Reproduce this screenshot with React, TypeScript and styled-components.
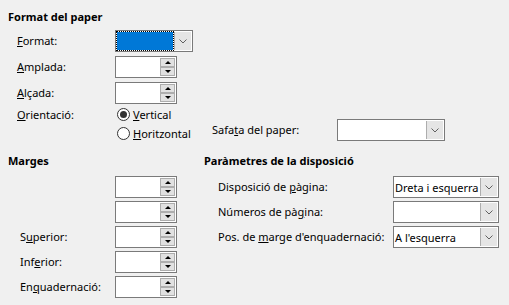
import React from "react";
import styled, { createGlobalStyle } from "styled-components";

const GlobalStyle = createGlobalStyle`
  body {
    margin: 0;
    background: #f0f0f0;
  }
`;

const Page = styled.div`
  width: 509px;
  height: 305px;
  background: #f0f0f0;
  font-family: "Noto Sans", "Open Sans", sans-serif;
  font-size: 11px;
  color: #000;
  box-sizing: border-box;
  padding: 9px 0 0 8px;
  overflow: hidden;
`;

const Heading = styled.div`
  font-weight: bold;
  height: 16px;
  line-height: 16px;
`;

const FieldGrid = styled.div<{ $indent: number; $labelWidth: number; $gap: number }>`
  display: grid;
  grid-template-columns: ${p => p.$labelWidth}px auto;
  grid-auto-rows: 22px;
  row-gap: ${p => p.$gap}px;
  padding-left: ${p => p.$indent}px;
  align-items: center;
`;

const Label = styled.span`
  white-space: nowrap;
  line-height: 16px;
`;

const TopSection = styled.section`
  display: flex;
  flex-direction: column;
  gap: 5px;
`;

const OrientRow = styled.div`
  display: grid;
  grid-template-columns: 98px auto;
  padding-left: 9px;
  margin-top: -3px;
`;

const RadioColumn = styled.div`
  display: flex;
  flex-direction: column;
`;

const RadioLine = styled.div`
  display: flex;
  align-items: center;
  height: 17px;
`;

const TrayLine = styled.div`
  display: flex;
  align-items: center;
  height: 22px;
  margin-top: -4px;
`;

const RadioItem = styled.label<{ $width?: number; $drop?: number }>`
  display: flex;
  align-items: center;
  gap: 3px;
  padding-left: 2px;
  height: 13px;
  width: ${p => (p.$width ? `${p.$width}px` : "auto")};
  box-sizing: border-box;
  white-space: nowrap;
  align-self: ${p => (p.$drop ? "flex-start" : "center")};
  margin-top: ${p => p.$drop ?? 0}px;
`;

const RadioCircle = styled.span<{ $checked?: boolean }>`
  width: 13px;
  height: 13px;
  border-radius: 50%;
  border: 1px solid #333;
  background: #fff;
  box-sizing: border-box;
  display: flex;
  align-items: center;
  justify-content: center;
  &::after {
    content: "";
    width: 7px;
    height: 7px;
    border-radius: 50%;
    background: #333;
    display: ${p => (p.$checked ? "block" : "none")};
  }
`;

const TrayLabel = styled(Label)`
  width: 125px;
`;

const BottomSection = styled.section`
  display: grid;
  grid-template-columns: 196px auto;
  margin-top: 12px;
`;

const Column = styled.div`
  display: flex;
  flex-direction: column;
  gap: 7px;
`;

const SpinBox = styled.div`
  width: 62px;
  height: 22px;
  box-sizing: border-box;
  border: 1px solid #7a7a7a;
  background: #fff;
  display: flex;
  justify-content: flex-end;
  align-items: center;
  padding-right: 1px;
`;

const SpinButtons = styled.div`
  display: flex;
  flex-direction: column;
`;

const SpinButton = styled.span<{ $down?: boolean }>`
  width: 15px;
  height: 9px;
  box-sizing: border-box;
  background: #e1e1e1;
  border: 1px solid #adadad;
  display: flex;
  align-items: center;
  justify-content: center;
  &::after {
    content: "";
    width: 0;
    height: 0;
    border-left: 3px solid transparent;
    border-right: 3px solid transparent;
    ${p =>
      p.$down
        ? "border-top: 3px solid #000;"
        : "border-bottom: 3px solid #000;"}
  }
`;

const Select = styled.div<{ $width: number }>`
  width: ${p => p.$width}px;
  height: 22px;
  box-sizing: border-box;
  border: 1px solid #7a7a7a;
  background: #fff;
  display: flex;
  align-items: stretch;
`;

const SelectValue = styled.div<{ $focused?: boolean }>`
  flex: 1;
  display: flex;
  align-items: center;
  padding-left: 1px;
  white-space: nowrap;
  overflow: hidden;
  ${p =>
    p.$focused
      ? `
    background: #0078d7;
    outline: 1px dotted #000;
    outline-offset: -1px;
    border: 1px solid #fff;
  `
      : ""}
`;

const ArrowBox = styled.div`
  width: 16px;
  background: #e5e5e5;
  border-left: 1px solid #adadad;
  display: flex;
  align-items: center;
  justify-content: center;
  margin: 1px 1px 1px 0;
`;

const Chevron = () => (
  <svg width="8" height="5" viewBox="0 0 8 5">
    <path d="M0.5 0.5 L4 4 L7.5 0.5" fill="none" stroke="#606060" strokeWidth="1" />
  </svg>
);

const Spin = () => (
  <SpinBox>
    <SpinButtons>
      <SpinButton />
      <SpinButton $down />
    </SpinButtons>
  </SpinBox>
);

const Dropdown: React.FC<{ width: number; value?: string; focused?: boolean }> = ({
  width,
  value,
  focused,
}) => (
  <Select $width={width}>
    <SelectValue $focused={focused}>{value}</SelectValue>
    <ArrowBox>
      <Chevron />
    </ArrowBox>
  </Select>
);

const App: React.FC = () => {
  return (
    <Page>
      <GlobalStyle />
      <TopSection>
        <Heading>Format del paper</Heading>
        <FieldGrid $indent={9} $labelWidth={98} $gap={4}>
          <Label>
            <u>F</u>ormat:
          </Label>
          <Dropdown width={78} focused />
          <Label>
            <u>A</u>mplada:
          </Label>
          <Spin />
          <Label>
            <u>A</u>lçada:
          </Label>
          <Spin />
        </FieldGrid>
        <OrientRow>
          <RadioLine>
            <Label>
              <u>O</u>rientació:
            </Label>
          </RadioLine>
          <RadioColumn>
            <RadioLine>
              <RadioItem>
                <RadioCircle $checked />
                <span>
                  <u>V</u>ertical
                </span>
              </RadioItem>
            </RadioLine>
            <TrayLine>
              <RadioItem $width={97} $drop={8}>
                <RadioCircle />
                <span>
                  <u>H</u>oritzontal
                </span>
              </RadioItem>
              <TrayLabel>
                Safa<u>t</u>a del paper:
              </TrayLabel>
              <Dropdown width={108} />
            </TrayLine>
          </RadioColumn>
        </OrientRow>
      </TopSection>
      <BottomSection>
        <Column>
          <Heading>Marges</Heading>
          <FieldGrid $indent={12} $labelWidth={95} $gap={3}>
            <Label />
            <Spin />
            <Label />
            <Spin />
            <Label>
              S<u>u</u>perior:
            </Label>
            <Spin />
            <Label>
              Inf<u>e</u>rior:
            </Label>
            <Spin />
            <Label>
              En<u>q</u>uadernació:
            </Label>
            <Spin />
          </FieldGrid>
        </Column>
        <Column>
          <Heading>Paràmetres de la disposició</Heading>
          <FieldGrid $indent={14} $labelWidth={175} $gap={3}>
            <Label>
              Disposició de <u>p</u>àgina:
            </Label>
            <Dropdown width={106} value="Dreta i esquerra" />
            <Label>
              Números de pà<u>g</u>ina:
            </Label>
            <Dropdown width={106} />
            <Label>
              Pos. de <u>m</u>arge d'enquadernació:
            </Label>
            <Dropdown width={106} value="A l'esquerra" />
          </FieldGrid>
        </Column>
      </BottomSection>
    </Page>
  );
};

export default App;
